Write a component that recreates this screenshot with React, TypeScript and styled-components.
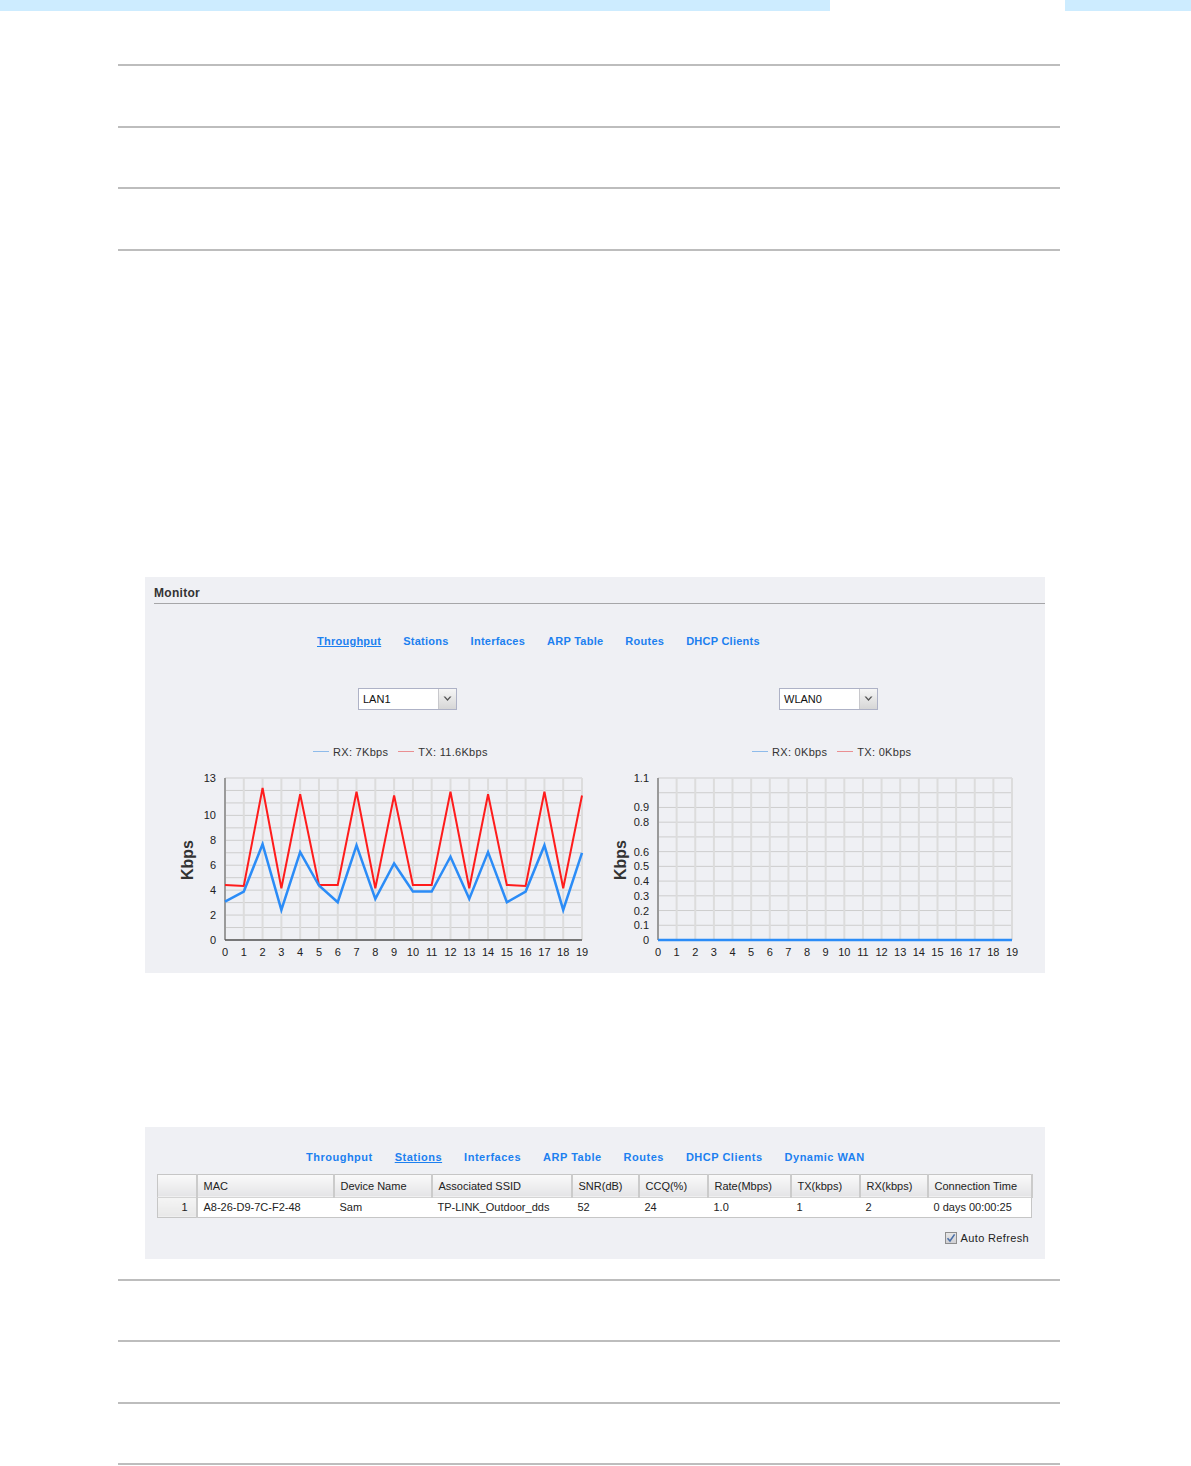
import React from 'react';
import styled, { createGlobalStyle } from 'styled-components';

const GlobalStyle = createGlobalStyle`
  html, body {
    margin: 0;
    padding: 0;
    background: #ffffff;
  }
  body {
    font-family: 'Liberation Sans', Arial, sans-serif;
    color: #222;
  }
`;

type Series = { color: string; width: number; values: number[] };

type ChartProps = {
  width: number;
  plotLeft: number;
  plotRight: number;
  yMax: number;
  steps: number;
  yLabels: { v: number; text: string }[];
  series: Series[];
};

const PLOT_TOP = 13;
const PLOT_BOTTOM = 175;

const LineChart = ({ width, plotLeft, plotRight, yMax, steps, yLabels, series }: ChartProps) => {
  const plotH = PLOT_BOTTOM - PLOT_TOP;
  const xStep = (plotRight - plotLeft) / 19;
  const yOf = (v: number) => PLOT_BOTTOM - (v / yMax) * plotH;
  const xs = Array.from({ length: 20 }, (_, i) => i);
  const hs = Array.from({ length: steps + 1 }, (_, i) => i);

  return (
    <ChartSvg width={width} height={200} viewBox={`0 0 ${width} 200`}>
      {hs.map((i) => (
        <line
          key={'h' + i}
          x1={plotLeft}
          x2={plotRight}
          y1={PLOT_BOTTOM - (i * plotH) / steps}
          y2={PLOT_BOTTOM - (i * plotH) / steps}
          stroke='#cdcdcd'
          strokeWidth={1}
        />
      ))}
      {xs.map((i) => (
        <line
          key={'v' + i}
          x1={plotLeft + i * xStep}
          x2={plotLeft + i * xStep}
          y1={PLOT_TOP}
          y2={PLOT_BOTTOM}
          stroke='#dcdcdc'
          strokeWidth={2}
        />
      ))}
      <line x1={plotLeft} x2={plotLeft} y1={PLOT_TOP} y2={PLOT_BOTTOM} stroke='#9a9a9a' strokeWidth={2} />
      <line x1={plotLeft} x2={plotRight} y1={PLOT_BOTTOM} y2={PLOT_BOTTOM} stroke='#555' strokeWidth={1.5} />
      {series.map((s, si) => (
        <polyline
          key={si}
          fill='none'
          stroke={s.color}
          strokeWidth={s.width}
          strokeLinejoin='miter'
          points={s.values.map((v, i) => `${plotLeft + i * xStep},${yOf(v)}`).join(' ')}
        />
      ))}
      {yLabels.map((l) => (
        <text
          key={l.text}
          x={plotLeft - 9}
          y={yOf(l.v) + 4}
          textAnchor='end'
          fontFamily='Liberation Sans, Arial, sans-serif'
          fontSize={11}
          fill='#222'
        >
          {l.text}
        </text>
      ))}
      {xs.map((i) => (
        <text
          key={'x' + i}
          x={plotLeft + i * xStep}
          y={191}
          textAnchor='middle'
          fontFamily='Liberation Sans, Arial, sans-serif'
          fontSize={11}
          fill='#222'
        >
          {i}
        </text>
      ))}
      <text
        x={0}
        y={0}
        transform={`translate(${plotLeft - 32}, 95) rotate(-90)`}
        textAnchor='middle'
        fontFamily='Liberation Sans, Arial, sans-serif'
        fontSize={16}
        fontWeight='bold'
        fill='#333'
      >
        Kbps
      </text>
    </ChartSvg>
  );
};

const TX_LAN = [4.42, 4.34, 12.2, 4.15, 11.7, 4.42, 4.42, 11.9, 4.15, 11.6, 4.42, 4.42, 11.9, 4.15, 11.7, 4.42, 4.34, 11.9, 4.15, 11.6];
const RX_LAN = [3.08, 3.89, 7.69, 2.41, 7.05, 4.37, 3.03, 7.59, 3.3, 6.14, 3.89, 3.89, 6.68, 3.3, 7.05, 3.03, 3.89, 7.59, 2.41, 7.0];

const LAN_LABELS = [13, 10, 8, 6, 4, 2, 0].map((v) => ({ v, text: String(v) }));
const WLAN_LABELS = [1.1, 0.9, 0.8, 0.6, 0.5, 0.4, 0.3, 0.2, 0.1, 0].map((v) => ({ v, text: String(v) }));

const MONITOR_TABS = ['Throughput', 'Stations', 'Interfaces', 'ARP Table', 'Routes', 'DHCP Clients'];
const STATION_TABS = ['Throughput', 'Stations', 'Interfaces', 'ARP Table', 'Routes', 'DHCP Clients', 'Dynamic WAN'];

const COLUMNS = [
  { label: '', width: 39 },
  { label: 'MAC', width: 137 },
  { label: 'Device Name', width: 98 },
  { label: 'Associated SSID', width: 140 },
  { label: 'SNR(dB)', width: 67 },
  { label: 'CCQ(%)', width: 69 },
  { label: 'Rate(Mbps)', width: 83 },
  { label: 'TX(kbps)', width: 69 },
  { label: 'RX(kbps)', width: 68 },
  { label: 'Connection Time', width: 104 }
];

const ROW = ['A8-26-D9-7C-F2-48', 'Sam', 'TP-LINK_Outdoor_dds', '52', '24', '1.0', '1', '2', '0 days 00:00:25'];

const Chevron = () => (
  <svg width='9' height='6' viewBox='0 0 9 6'>
    <path d='M0.5 0.5 L4.5 5 L8.5 0.5 L6.8 0.5 L4.5 3 L2.2 0.5 Z' fill='#555' />
  </svg>
);

const Check = () => (
  <svg width='10' height='10' viewBox='0 0 10 10'>
    <path d='M1.5 5.2 L4 8 L8.6 1.4' fill='none' stroke='#4a6fa8' strokeWidth='1.6' />
  </svg>
);

const App = () => {
  return (
    <>
      <GlobalStyle />
      <TopBar>
        <BarPiece $w={830} $blue />
        <BarPiece $w={235} />
        <BarPiece $blue $grow />
      </TopBar>
      <RuleList $top={53}>
        <Rule />
        <Rule />
        <Rule />
        <Rule />
      </RuleList>

      <MonitorPanel>
        <PanelTitle>Monitor</PanelTitle>
        <TabRow $left={172} $top={30}>
          {MONITOR_TABS.map((t, i) => (
            <Tab key={t} $active={i === 0} $spacing={0.25}>
              {t}
            </Tab>
          ))}
        </TabRow>
        <ChartsRow>
          <ChartColumn $w={425}>
            <SelectRow $pad={183}>
              <Select>
                <SelectText>LAN1</SelectText>
                <SelectArrow>
                  <Chevron />
                </SelectArrow>
              </Select>
            </SelectRow>
            <Legend $pad={138}>
              <LegendItem $color='#8ebbea'>RX: 7Kbps</LegendItem>
              <LegendItem $color='#ea8f92'>TX: 11.6Kbps</LegendItem>
            </Legend>
            <LineChart
              width={425}
              plotLeft={50}
              plotRight={407}
              yMax={13}
              steps={13}
              yLabels={LAN_LABELS}
              series={[
                { color: '#ff1c1c', width: 2, values: TX_LAN },
                { color: '#2b8cf7', width: 2.5, values: RX_LAN }
              ]}
            />
          </ChartColumn>
          <ChartColumn $w={430}>
            <SelectRow $pad={179}>
              <Select>
                <SelectText>WLAN0</SelectText>
                <SelectArrow>
                  <Chevron />
                </SelectArrow>
              </Select>
            </SelectRow>
            <Legend $pad={152}>
              <LegendItem $color='#8ebbea'>RX: 0Kbps</LegendItem>
              <LegendItem $color='#ea8f92'>TX: 0Kbps</LegendItem>
            </Legend>
            <LineChart
              width={430}
              plotLeft={58}
              plotRight={412}
              yMax={1.1}
              steps={11}
              yLabels={WLAN_LABELS}
              series={[
                { color: '#ff1c1c', width: 2, values: Array(20).fill(0) },
                { color: '#2b8cf7', width: 2.5, values: Array(20).fill(0) }
              ]}
            />
          </ChartColumn>
        </ChartsRow>
      </MonitorPanel>

      <StationsPanel>
        <TabRow $left={161} $top={0}>
          {STATION_TABS.map((t, i) => (
            <Tab key={t} $active={i === 1} $spacing={0.5}>
              {t}
            </Tab>
          ))}
        </TabRow>
        <Table>
          <colgroup>
            {COLUMNS.map((c, i) => (
              <col key={i} style={{ width: c.width }} />
            ))}
          </colgroup>
          <thead>
            <tr>
              {COLUMNS.map((c, i) => (
                <HeadCell key={i}>{c.label}</HeadCell>
              ))}
            </tr>
          </thead>
          <tbody>
            <tr>
              <IndexCell>1</IndexCell>
              {ROW.map((v, i) => (
                <BodyCell key={i}>{v}</BodyCell>
              ))}
            </tr>
          </tbody>
        </Table>
        <RefreshRow>
          <CheckBox>
            <Check />
          </CheckBox>
          Auto Refresh
        </RefreshRow>
      </StationsPanel>

      <RuleList $top={20}>
        <Rule />
        <Rule />
        <Rule />
        <Rule />
      </RuleList>
    </>
  );
};

export default App;

const TopBar = styled.div`
  display: flex;
  height: 11px;
`;

const BarPiece = styled.div<{ $w?: number; $blue?: boolean; $grow?: boolean }>`
  background: ${(p) => (p.$blue ? '#cdecff' : '#ffffff')};
  width: ${(p) => (p.$w ? `${p.$w}px` : 'auto')};
  flex: ${(p) => (p.$grow ? '1' : 'none')};
`;

const RuleList = styled.div<{ $top: number }>`
  display: flex;
  flex-direction: column;
  gap: 59.5px;
  margin: ${(p) => p.$top}px 0 0 118px;
  width: 942px;
`;

const Rule = styled.div`
  height: 2px;
  background: #bdbdbd;
`;

const MonitorPanel = styled.section`
  margin: 326px 0 0 145px;
  width: 900px;
  height: 396px;
  background: #eff0f4;
  box-sizing: border-box;
  overflow: hidden;
`;

const PanelTitle = styled.div`
  margin-left: 9px;
  padding: 9px 0 3px;
  height: 14px;
  border-bottom: 1px solid #a6a6a8;
  font-size: 12px;
  font-weight: bold;
  line-height: 14px;
  color: #333;
  letter-spacing: 0.3px;
`;

const TabRow = styled.nav<{ $left: number; $top: number }>`
  display: flex;
  gap: 22px;
  padding-left: ${(p) => p.$left}px;
  margin-top: ${(p) => p.$top}px;
  height: 14px;
`;

const Tab = styled.a<{ $active?: boolean; $spacing: number }>`
  font-size: 11px;
  font-weight: bold;
  line-height: 14px;
  color: #1c80f0;
  letter-spacing: ${(p) => p.$spacing}px;
  text-decoration: ${(p) => (p.$active ? 'underline' : 'none')};
  cursor: pointer;
`;

const ChartsRow = styled.div`
  display: flex;
  padding-left: 30px;
  margin-top: 40px;
`;

const ChartColumn = styled.div<{ $w: number }>`
  display: flex;
  flex-direction: column;
  width: ${(p) => p.$w}px;
`;

const ChartSvg = styled.svg`
  display: block;
  margin-top: 6px;
`;

const SelectRow = styled.div<{ $pad: number }>`
  display: flex;
  padding-left: ${(p) => p.$pad}px;
`;

const Select = styled.div`
  display: flex;
  width: 99px;
  height: 22px;
  box-sizing: border-box;
  border: 1px solid #aeb2c6;
  background: #ffffff;
`;

const SelectText = styled.span`
  flex: 1;
  padding-left: 4px;
  font-size: 11px;
  line-height: 20px;
  color: #111;
`;

const SelectArrow = styled.span`
  display: flex;
  align-items: center;
  justify-content: center;
  width: 17px;
  border-left: 1px solid #c8c8cc;
  background: linear-gradient(#f6f6f6, #d6d6d6);
`;

const Legend = styled.div<{ $pad: number }>`
  display: flex;
  gap: 10px;
  padding-left: ${(p) => p.$pad}px;
  margin-top: 35px;
  height: 14px;
`;

const LegendItem = styled.span<{ $color: string }>`
  display: flex;
  align-items: center;
  gap: 4px;
  font-size: 11px;
  line-height: 14px;
  color: #333;
  letter-spacing: 0.3px;
  &::before {
    content: '';
    width: 16px;
    height: 1px;
    background: ${(p) => p.$color};
  }
`;

const StationsPanel = styled.section`
  margin: 154px 0 0 145px;
  width: 900px;
  height: 132px;
  padding-top: 23px;
  box-sizing: border-box;
  background: #eff0f4;
`;

const Table = styled.table`
  margin: 10px 0 0 12px;
  width: 874px;
  table-layout: fixed;
  border-collapse: collapse;
  border: 1px solid #c6c6c6;
  font-size: 11px;
  color: #222;
`;

const HeadCell = styled.th`
  height: 22px;
  padding: 0 0 0 6px;
  text-align: left;
  font-weight: normal;
  background: linear-gradient(#fafafa, #e4e4e6);
  border-right: 2px solid #cbcbcb;
  border-bottom: 1px solid #d4d4d4;
  white-space: nowrap;
  overflow: hidden;
`;

const IndexCell = styled.td`
  height: 19px;
  padding: 0 8px 0 0;
  text-align: right;
  background: linear-gradient(#f5f5f5, #e8e8e8);
  border-right: 2px solid #cbcbcb;
`;

const BodyCell = styled.td`
  height: 19px;
  padding: 0 0 0 6px;
  background: #ffffff;
  white-space: nowrap;
  overflow: hidden;
`;

const RefreshRow = styled.div`
  display: flex;
  align-items: center;
  justify-content: flex-end;
  gap: 4px;
  margin-top: 13px;
  padding-right: 16px;
  font-size: 11px;
  line-height: 14px;
  color: #222;
  letter-spacing: 0.35px;
`;

const CheckBox = styled.span`
  display: flex;
  align-items: center;
  justify-content: center;
  width: 12px;
  height: 12px;
  box-sizing: border-box;
  border: 1px solid #8e8e8e;
  background: linear-gradient(#e6e6e6, #d0d0d4);
`;
